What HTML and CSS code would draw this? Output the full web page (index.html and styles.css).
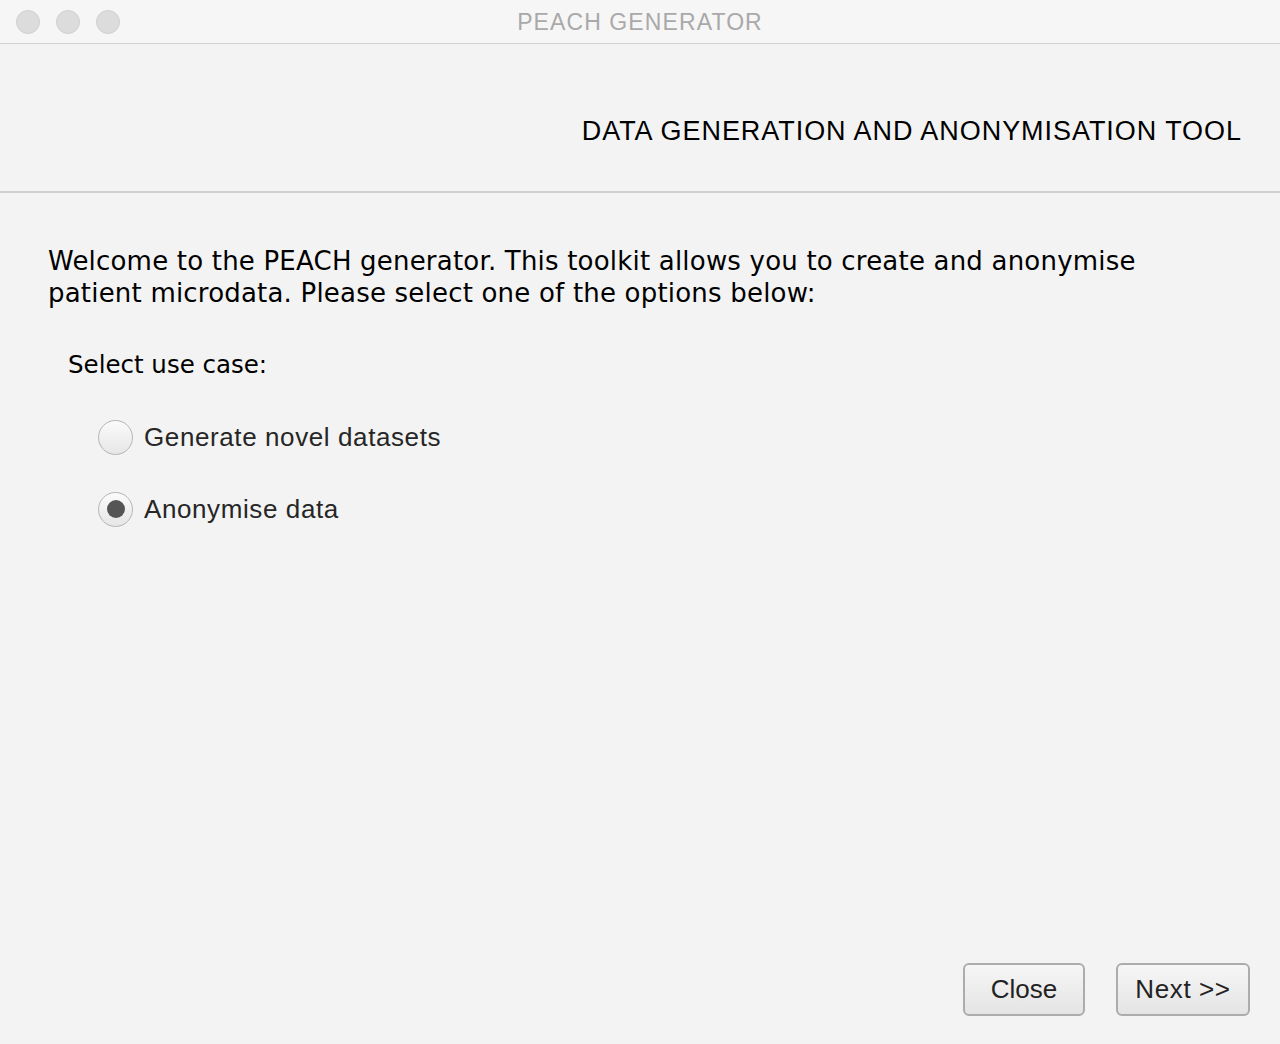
FILE: index.html
```html
<!DOCTYPE html>
<html>
<head>
<meta charset="utf-8">
<link rel="stylesheet" href="styles.css">
</head>
<body>
<div class="window">
  <div class="titlebar">
    <div class="lights">
      <span class="light"></span><span class="light"></span><span class="light"></span>
    </div>
    <div class="title">PEACH GENERATOR</div>
  </div>
  <div class="header">
    <div class="header-text">DATA GENERATION AND ANONYMISATION TOOL</div>
  </div>
  <div class="content">
    <p class="intro">Welcome to the PEACH generator. This toolkit allows you to create and anonymise<br>patient microdata. Please select one of the options below:</p>
    <div class="label">Select use case:</div>
    <div class="options">
      <div class="option"><span class="radio"></span><span class="opt-text">Generate novel datasets</span></div>
      <div class="option"><span class="radio checked"></span><span class="opt-text">Anonymise data</span></div>
    </div>
  </div>
  <div class="footer">
    <button class="btn btn-close">Close</button>
    <button class="btn btn-next">Next &gt;&gt;</button>
  </div>
</div>
</body>
</html>
```
FILE: styles.css
```css
html, body {
  margin: 0;
  padding: 0;
  background: #f3f3f3;
}
.window {
  width: 1280px;
  height: 1044px;
  display: flex;
  flex-direction: column;
  font-family: "Liberation Sans", Arial, sans-serif;
  background: #f3f3f3;
  overflow: hidden;
}
.titlebar {
  height: 43px;
  flex: none;
  position: relative;
  background: #f6f6f6;
  border-bottom: 1px solid #d2d2d2;
  display: flex;
  align-items: center;
  justify-content: center;
}
.lights {
  position: absolute;
  left: 16px;
  top: 10px;
  display: flex;
  gap: 16px;
}
.light {
  width: 22px;
  height: 22px;
  border-radius: 50%;
  background: #dcdcdc;
  border: 1px solid #d0d0d0;
}
.title {
  font-size: 23px;
  color: #a9a9a9;
  letter-spacing: 1.1px;
  padding-top: 2px;
}
.header {
  height: 147px;
  flex: none;
  border-bottom: 2px solid #d0d0d0;
  display: flex;
  justify-content: flex-end;
  padding-right: 39px;
}
.header-text {
  margin-top: 72px;
  font-size: 27px;
  line-height: 30px;
  letter-spacing: 0.95px;
  margin-right: -1px;
  color: #000;
}
.content {
  flex: 1;
  padding: 0 0 0 48px;
}
.intro {
  margin: 52px 0 0 0;
  font-family: "DejaVu Sans", sans-serif;
  font-size: 26px;
  line-height: 32px;
  letter-spacing: 0.2px;
  color: #000;
}
.label {
  margin: 41px 0 0 20px;
  font-family: "DejaVu Sans", sans-serif;
  font-size: 24.5px;
  line-height: 30px;
  color: #000;
}
.options {
  margin: 40px 0 0 50px;
  display: flex;
  flex-direction: column;
  gap: 38px;
}
.option {
  display: flex;
  align-items: center;
  gap: 11px;
  height: 34px;
}
.radio {
  border-radius: 50%;
  border: 1.5px solid #b5b5b5;
  background: linear-gradient(#fbfbfb, #e6e6e6);
  box-sizing: border-box;
  width: 35px;
  height: 35px;
  display: flex;
  align-items: center;
  justify-content: center;
}
.radio.checked::after {
  content: "";
  width: 18px;
  height: 18px;
  border-radius: 50%;
  background: #555;
}
.opt-text {
  font-size: 26px;
  letter-spacing: 0.6px;
  color: #262626;
}
.footer {
  flex: none;
  display: flex;
  justify-content: flex-end;
  gap: 31px;
  padding: 0 30px 28px 0;
}
.btn {
  height: 53px;
  border: 2px solid #acacac;
  border-radius: 6px;
  background: linear-gradient(#f6f6f6, #e4e4e4);
  font-family: "Liberation Sans", Arial, sans-serif;
  font-size: 26px;
  color: #222;
  padding: 0;
}
.btn-close { width: 122px; }
.btn-next { width: 134px; letter-spacing: 0.6px; }
```
